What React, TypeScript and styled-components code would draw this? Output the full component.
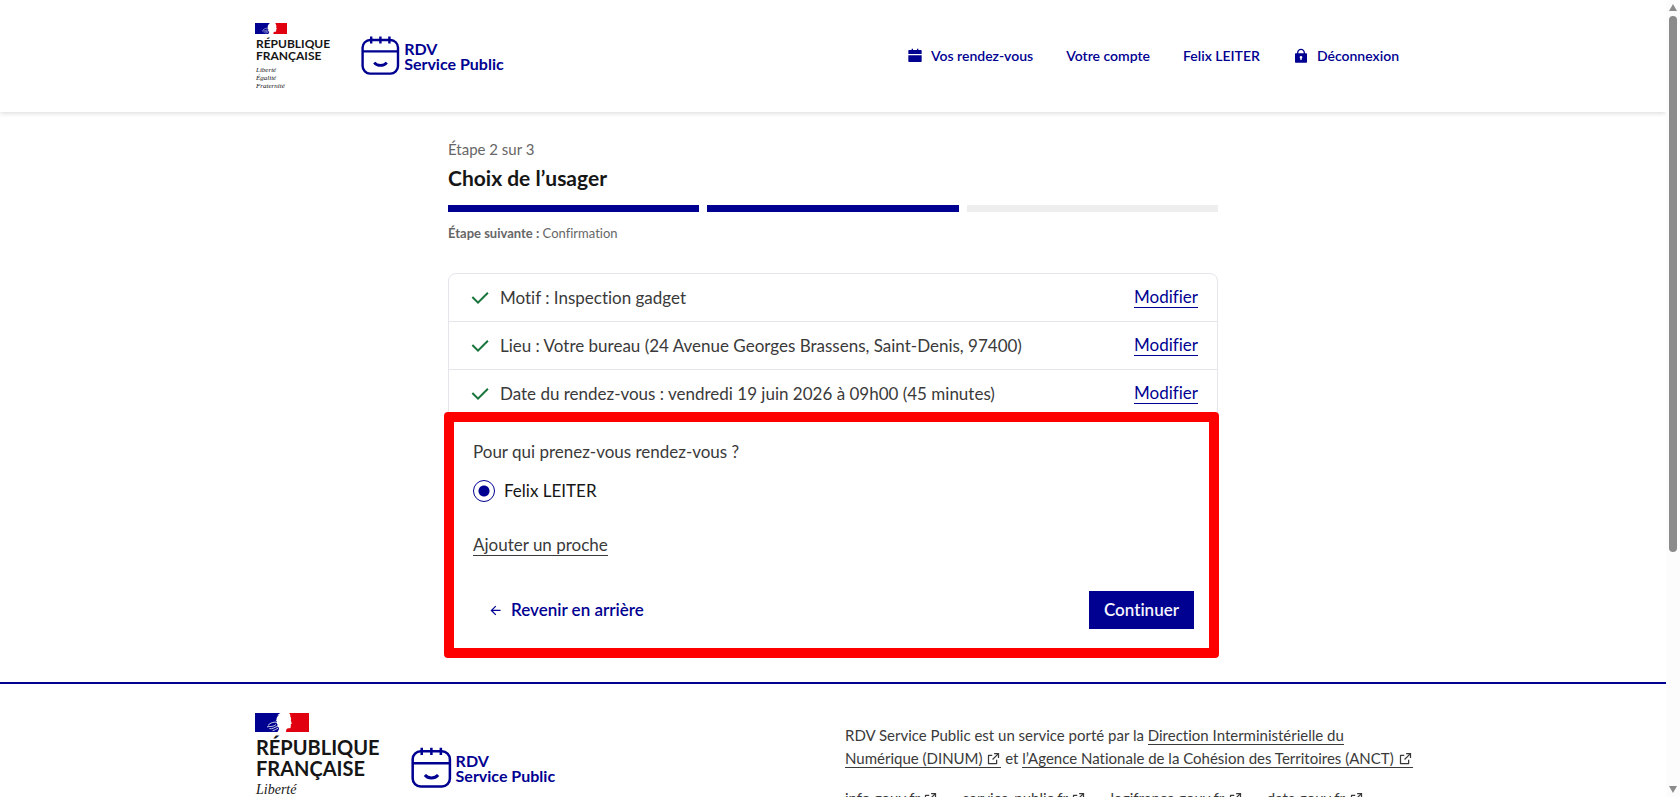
import React from 'react';
import styled, { createGlobalStyle, css } from 'styled-components';
import {
  RiArrowLeftLine,
  RiCalendarFill,
  RiCheckLine,
  RiExternalLinkLine,
  RiLock2Fill,
} from 'react-icons/ri';

const blue = '#000091';
const red = '#e1000f';
const grey = '#3a3a3a';
const mention = '#666666';
const line = '#e5e5ec';

const GlobalStyle = createGlobalStyle`
  *, *::before, *::after { box-sizing: border-box; }
  body {
    margin: 0;
    background: #fff;
    color: ${grey};
    font-family: Lato, "Liberation Sans", sans-serif;
    font-size: 17px;
    line-height: 24px;
    font-variant-ligatures: no-common-ligatures;
  }
  a { color: inherit; text-decoration: none; }
  p, h2, ul { margin: 0; padding: 0; }
  ul { list-style: none; }
  button { font: inherit; cursor: pointer; }
`;

const Shell = styled.div`
  display: grid;
  grid-template-columns: minmax(0, 1fr) 14px;
  height: 100vh;
`;

const Page = styled.div`
  overflow-y: auto;
  scrollbar-width: none;
`;

const Container = styled.div`
  display: flex;
  justify-content: space-between;
  max-width: 1160px;
  margin: 0 auto;
`;

/* Scroll gutter */

const Gutter = styled.div`
  display: flex;
  flex-direction: column;
  align-items: center;
  gap: 5px;
  padding: 4px 0;
  background: #fcfcfc;
`;

const Arrow = styled.svg`
  flex: none;
  width: 8px;
  height: 7px;
  fill: #8b8b8b;
`;

const Track = styled.div`
  flex: 1;
  display: flex;
`;

const Thumb = styled.div`
  width: 8px;
  height: 70%;
  border-radius: 4px;
  background: #8b8b8b;
`;

/* Header */

const Header = styled.header`
  position: relative;
  height: 112px;
  background: #fff;
  box-shadow: 0 1px 5px rgba(0, 0, 18, 0.16);
`;

const HeaderBar = styled(Container)`
  align-items: flex-start;
  padding: 23px 14px 0 2px;
`;

const Brand = styled.div`
  display: flex;
  gap: 31px;
`;

const StateLogo = styled.div<{ $large?: boolean }>`
  display: flex;
  flex-direction: column;
  align-items: flex-start;
  color: #161616;
  font-weight: 700;
  font-size: ${(p) => (p.$large ? 20 : 12)}px;
  line-height: ${(p) => (p.$large ? 21 : 12)}px;

  svg {
    width: ${(p) => (p.$large ? 54 : 32)}px;
    height: ${(p) => (p.$large ? 19 : 11)}px;
    margin-bottom: ${(p) => (p.$large ? 5 : 4)}px;
  }

  span {
    padding-left: 1px;
  }
`;

const Motto = styled.em<{ $large?: boolean }>`
  margin-top: ${(p) => (p.$large ? 3 : 4)}px;
  padding-left: 1px;
  color: #161616;
  font-family: "Liberation Serif", serif;
  font-weight: 400;
  font-size: ${(p) => (p.$large ? 14 : 7)}px;
  line-height: ${(p) => (p.$large ? 16 : 8)}px;
`;

const Product = styled.a<{ $large?: boolean }>`
  display: flex;
  align-items: center;
  align-self: flex-start;
  gap: 4px;
  margin-top: ${(p) => (p.$large ? 34 : 13)}px;
  color: ${blue};
  font-weight: 700;
  font-size: 16px;
  line-height: 15px;

  svg {
    width: ${(p) => (p.$large ? 41 : 39)}px;
    height: ${(p) => (p.$large ? 41 : 39)}px;
  }
`;

const Nav = styled.nav`
  display: flex;
  gap: 33px;
  padding-top: 21px;
`;

const NavLink = styled.a`
  display: flex;
  align-items: center;
  gap: 8px;
  color: ${blue};
  font-weight: 600;
  font-size: 14px;
  line-height: 24px;
`;

/* Stepper */

const Main = styled.main`
  max-width: 770px;
  margin: 0 auto;
  padding: 25px 0 29px;
`;

const StepTitle = styled.h2`
  display: flex;
  flex-direction: column;
  gap: 3px;
  color: #161616;
  font-size: 21px;
  line-height: 28px;
`;

const StepState = styled.span`
  color: ${mention};
  font-weight: 400;
  font-size: 15px;
  line-height: 24px;
`;

const Steps = styled.div`
  display: grid;
  grid-template-columns: repeat(3, 1fr);
  gap: 8px;
  margin: 13px 0 11px;
`;

const StepBar = styled.span<{ $done: boolean }>`
  height: 7px;
  background: ${(p) => (p.$done ? blue : '#eeeeee')};
`;

const NextStep = styled.p`
  color: ${mention};
  font-size: 13px;
  line-height: 20px;
`;

/* Booking card */

const Card = styled.section`
  margin-top: 30px;
  border: 1px solid ${line};
  border-radius: 8px;
`;

const Row = styled.li`
  display: flex;
  align-items: center;
  gap: 8px;
  height: 48px;
  padding: 0 19px;
  border-bottom: 1px solid ${line};

  svg {
    flex: none;
    color: #18753c;
  }
`;

const RowText = styled.span`
  flex: 1;
`;

const linked = css`
  border-bottom: 1px solid currentColor;
`;

const ModifyLink = styled.a`
  ${linked}
  color: ${blue};
  line-height: 20px;
`;

const UserForm = styled.form`
  position: relative;
  padding: 22px 23px 23px 24px;
`;

const Highlight = styled.div`
  position: absolute;
  inset: -6px -2px -6px -5px;
  border: 10px solid #ff0000;
  border-radius: 4px;
  pointer-events: none;
`;

const Fieldset = styled.fieldset`
  margin: 0;
  padding: 0;
  border: 0;
`;

const Legend = styled.legend`
  padding: 0;
  margin-bottom: 15px;
`;

const Choice = styled.label`
  display: flex;
  align-items: center;
  gap: 9px;
  color: #161616;
`;

const Radio = styled.input`
  appearance: none;
  width: 22px;
  height: 22px;
  margin: 0;
  border: 1px solid ${blue};
  border-radius: 50%;

  &:checked {
    background: radial-gradient(circle, ${blue} 5px, transparent 6px);
  }
`;

const AddLink = styled.a`
  ${linked}
`;

const AddRelative = styled.p`
  padding: 30px 0 34px;
`;

const Actions = styled.div`
  display: flex;
  justify-content: space-between;
`;

const Button = styled.button<{ $primary?: boolean }>`
  display: flex;
  align-items: center;
  gap: 8px;
  height: 38px;
  padding: 0 15px;
  border: 0;
  background: ${(p) => (p.$primary ? blue : 'transparent')};
  color: ${(p) => (p.$primary ? '#f5f5fe' : blue)};
  font-weight: 600;
`;

/* Footer */

const Footer = styled.footer`
  border-top: 2px solid ${blue};
  padding: 29px 0 40px;
`;

const FooterBar = styled(Container)`
  padding-left: 2px;
`;

const FooterContent = styled.div`
  flex: 0 0 568px;
  padding-top: 11px;
  font-size: 15px;
  line-height: 23px;
  white-space: nowrap;

  svg {
    width: 15px;
    height: 15px;
    vertical-align: -2px;
  }
`;

const FooterLink = styled.a`
  ${linked}
`;

const SiteList = styled.ul`
  display: flex;
  gap: 24px;
  margin-top: 17px;
`;

function Flag() {
  return (
    <svg viewBox="0 0 54 19" preserveAspectRatio="none" aria-hidden="true">
      <rect width="54" height="19" fill="#fff" />
      <path
        fill={blue}
        d="M0 0H25.5C24 .8 23.2 1.4 22.4 2.6L24 2.2C22 3.6 21.4 5 21.6 6.6L20.6 7.4L22 8C21.4 9.4 21.6 10.6 22.6 11.6C21.8 13 22.4 13.8 23.8 14.6C24.4 16 23.6 17.4 22.4 19H0Z"
      />
      <path fill={red} d="M34 0H54V19H31C31 17 31.4 15.6 33 15.2C35 15.6 36 15 35.6 13.4L36 12.2L35.6 11.4L36.8 10.4L35.8 7.6C36.4 6 36 4.4 35.2 3.2C35.6 2 35 1 34 0Z" />
      <path
        fill="none"
        stroke="#fff"
        strokeWidth=".8"
        d="M13 12.4C15.6 9.6 18.6 8.6 22.6 9.4M12 14C15 12.8 17 14.6 21 11.6M14.4 15.6C17.6 16.4 19 14.4 22.4 13.4M17.6 17.6C19.8 17.4 21 16 23 15.2"
      />
    </svg>
  );
}

function CalendarLogo() {
  return (
    <svg viewBox="0 0 39 39" fill="none" stroke={blue} strokeWidth="2.4" aria-hidden="true">
      <rect x="1.6" y="4" width="35.4" height="33.6" rx="7.6" />
      <path d="M1.6 15.4H37M10.2 .6V7.6M19.4 .6V7.6M28.4 .6V7.6" />
      <path d="M13.2 26.6C16.4 30.4 22.6 30.4 25.8 26.6" strokeWidth="2.8" />
    </svg>
  );
}

function Logos({ large }: { large?: boolean }) {
  return (
    <Brand>
      <StateLogo $large={large}>
        <Flag />
        <span>RÉPUBLIQUE</span>
        <span>FRANÇAISE</span>
        <Motto $large={large}>
          Liberté
          <br />
          Égalité
          <br />
          Fraternité
        </Motto>
      </StateLogo>
      <Product href="#accueil" $large={large}>
        <CalendarLogo />
        <span>
          RDV
          <br />
          Service Public
        </span>
      </Product>
    </Brand>
  );
}

const choices = [
  'Motif : Inspection gadget',
  'Lieu : Votre bureau (24 Avenue Georges Brassens, Saint-Denis, 97400)',
  'Date du rendez-vous : vendredi 19 juin 2026 à 09h00 (45 minutes)',
];

const sites = ['info.gouv.fr', 'service-public.fr', 'legifrance.gouv.fr', 'data.gouv.fr'];

export default function App() {
  return (
    <>
      <GlobalStyle />
      <Shell>
        <Page>
          <Header>
            <HeaderBar>
              <Logos />
              <Nav>
                <NavLink href="#rendez-vous">
                  <RiCalendarFill size={16} />
                  Vos rendez-vous
                </NavLink>
                <NavLink href="#compte">Votre compte</NavLink>
                <NavLink href="#profil">Felix LEITER</NavLink>
                <NavLink href="#deconnexion">
                  <RiLock2Fill size={16} />
                  Déconnexion
                </NavLink>
              </Nav>
            </HeaderBar>
          </Header>

          <Main>
            <StepTitle>
              <StepState>Étape 2 sur 3</StepState>
              Choix de l’usager
            </StepTitle>
            <Steps>
              <StepBar $done />
              <StepBar $done />
              <StepBar $done={false} />
            </Steps>
            <NextStep>
              <strong>Étape suivante :</strong> Confirmation
            </NextStep>

            <Card>
              <ul>
                {choices.map((choice) => (
                  <Row key={choice}>
                    <RiCheckLine size={24} />
                    <RowText>{choice}</RowText>
                    <ModifyLink href="#modifier">Modifier</ModifyLink>
                  </Row>
                ))}
              </ul>
              <UserForm onSubmit={(e) => e.preventDefault()}>
                <Fieldset>
                  <Legend>Pour qui prenez-vous rendez-vous ?</Legend>
                  <Choice>
                    <Radio type="radio" name="usager" defaultChecked />
                    Felix LEITER
                  </Choice>
                </Fieldset>
                <AddRelative>
                  <AddLink href="#proche">Ajouter un proche</AddLink>
                </AddRelative>
                <Actions>
                  <Button type="button">
                    <RiArrowLeftLine size={15} />
                    Revenir en arrière
                  </Button>
                  <Button type="submit" $primary>
                    Continuer
                  </Button>
                </Actions>
                <Highlight />
              </UserForm>
            </Card>
          </Main>

          <Footer>
            <FooterBar>
              <Logos large />
              <FooterContent>
                <p>
                  RDV Service Public est un service porté par la{' '}
                  <FooterLink href="#dinum">
                    Direction Interministérielle du
                    <br />
                    Numérique (DINUM) <RiExternalLinkLine />
                  </FooterLink>{' '}
                  et{' '}
                  <FooterLink href="#anct">
                    l’Agence Nationale de la Cohésion des Territoires (ANCT) <RiExternalLinkLine />
                  </FooterLink>
                </p>
                <SiteList>
                  {sites.map((site) => (
                    <li key={site}>
                      <a href={'#' + site}>
                        {site} <RiExternalLinkLine />
                      </a>
                    </li>
                  ))}
                </SiteList>
              </FooterContent>
            </FooterBar>
          </Footer>
        </Page>
        <Gutter aria-hidden="true">
          <Arrow viewBox="0 0 8 7">
            <path d="M4 0 8 7H0Z" />
          </Arrow>
          <Track>
            <Thumb />
          </Track>
          <Arrow viewBox="0 0 8 7">
            <path d="M4 7 8 0H0Z" />
          </Arrow>
        </Gutter>
      </Shell>
    </>
  );
}
